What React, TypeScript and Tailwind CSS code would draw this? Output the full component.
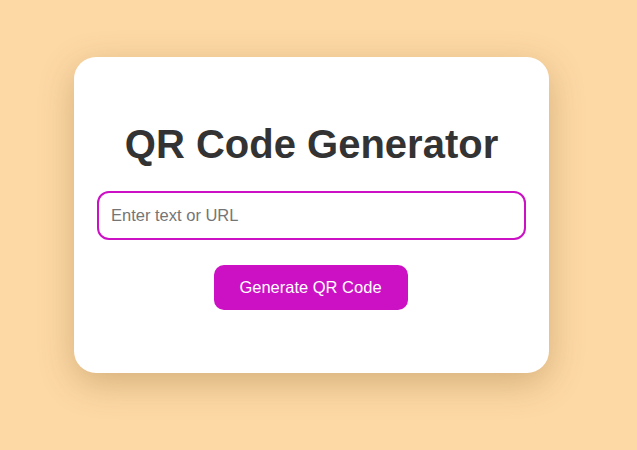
export default function App() {
  return (
    <div
      className="min-h-[450px] w-full bg-[#fdd9a6] pl-[74px] pt-[57px]"
      style={{ fontFamily: '"Liberation Sans", Arial, sans-serif' }}
    >
      <div className="w-[475px] h-[316px] bg-white rounded-[22px] shadow-[0_10px_35px_rgba(120,80,20,0.3)] px-[23px] pt-[65px] flex flex-col items-center">
        <h1 className="text-[40px] leading-[45px] font-bold text-[#333333] text-center">
          QR Code Generator
        </h1>
        <input
          type="text"
          placeholder="Enter text or URL"
          className="mt-[24px] w-full h-[49px] border-2 border-[#cc11c4] rounded-[12px] pl-[12px] text-[16.5px] text-[#333] placeholder:text-[#757575] outline-none"
        />
        <button className="mt-[25px] ml-[-2px] w-[194px] h-[45px] bg-[#cc11c4] text-white text-[16.5px] rounded-[10px]">
          Generate QR Code
        </button>
      </div>
    </div>
  );
}
